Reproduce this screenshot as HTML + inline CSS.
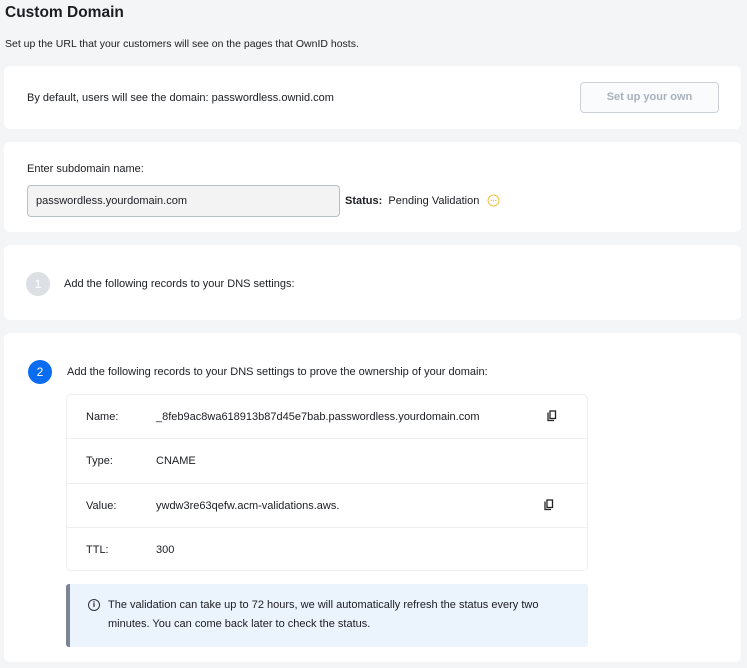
<!DOCTYPE html>
<html><head><style>
*{margin:0;padding:0;box-sizing:border-box}
body{width:747px;height:668px;background:#f4f5f7;font-family:"Liberation Sans",sans-serif;color:#1b1d21;font-size:11px;position:relative;overflow:hidden}
.a{position:absolute;white-space:nowrap}
.card{position:absolute;left:4px;width:737px;background:#fff;border-radius:6px}
.row{position:absolute;left:0;width:100%;height:44px;border-top:1px solid #eceef1}
.row span{position:absolute;top:16px}
.row svg{position:absolute;top:15px}
</style></head><body>
<div class="a" style="left:5px;top:4px;font-size:15.5px;font-weight:bold">Custom Domain</div>
<div class="a" style="left:5px;top:38px;font-size:10.5px">Set up the URL that your customers will see on the pages that OwnID hosts.</div>

<div class="card" style="top:66px;height:63px">
<div class="a" style="left:23px;top:26px">By default, users will see the domain: passwordless.ownid.com</div>
<div class="a" style="left:576px;top:16px;width:139px;height:31px;border:1px solid #ccd1d8;border-radius:4px;background:#fafbfc;color:#a9b1bd;text-align:center;line-height:29px;font-weight:bold">Set up your own</div>
</div>

<div class="card" style="top:142px;height:90px">
<div class="a" style="left:23px;top:21px">Enter subdomain name:</div>
<div class="a" style="left:23px;top:43px;width:313px;height:32px;border:1px solid #b8bec7;border-radius:4px;background:#f3f3f3;line-height:30px;padding-left:8px">passwordless.yourdomain.com</div>
<div class="a" style="left:341px;top:53px"><b>Status:</b>&nbsp; Pending Validation</div>
<svg class="a" style="left:483px;top:52px" width="13" height="13" viewBox="0 0 13 13"><circle cx="6.5" cy="6.5" r="5.5" fill="none" stroke="#f0c040" stroke-width="1"/><circle cx="4.2" cy="6.5" r=".7" fill="#f0c040"/><circle cx="6.5" cy="6.5" r=".7" fill="#f0c040"/><circle cx="8.8" cy="6.5" r=".7" fill="#f0c040"/></svg>
</div>

<div class="card" style="top:245px;height:75px">
<div class="a" style="left:22px;top:27px;width:24px;height:24px;border-radius:50%;background:#dcdfe3;color:#fff;text-align:center;line-height:24px;font-size:12px">1</div>
<div class="a" style="left:60px;top:33px">Add the following records to your DNS settings:</div>
</div>

<div class="card" style="top:333px;height:329px">
<div class="a" style="left:24px;top:27px;width:24px;height:24px;border-radius:50%;background:#0a6cf0;color:#fff;text-align:center;line-height:24px;font-size:12px">2</div>
<div class="a" style="left:63px;top:33px">Add the following records to your DNS settings to prove the ownership of your domain:</div>
<div class="a" style="left:62px;top:61px;width:522px;height:177px;border:1px solid #eceef1;border-radius:5px;overflow:hidden">
 <div class="row" style="top:-1px"><span style="left:19px">Name:</span><span style="left:89px">_8feb9ac8wa618913b87d45e7bab.passwordless.yourdomain.com</span><svg style="left:480px" width="10" height="12" viewBox="0 0 10 12"><path d="M1 2.5V10.5H7" fill="none" stroke="#222" stroke-width="1.3"/><rect x="3" y="1" width="5.5" height="7.5" fill="none" stroke="#222" stroke-width="1.3"/></svg></div>
 <div class="row" style="top:43px"><span style="left:19px">Type:</span><span style="left:89px">CNAME</span></div>
 <div class="row" style="top:88px"><span style="left:19px">Value:</span><span style="left:89px">ywdw3re63qefw.acm-validations.aws.</span><svg style="left:477px" width="10" height="12" viewBox="0 0 10 12"><path d="M1 2.5V10.5H7" fill="none" stroke="#222" stroke-width="1.3"/><rect x="3" y="1" width="5.5" height="7.5" fill="none" stroke="#222" stroke-width="1.3"/></svg></div>
 <div class="row" style="top:132px"><span style="left:19px">TTL:</span><span style="left:89px">300</span></div>
</div>
<div class="a" style="left:62px;top:251px;width:522px;height:63px;background:#ebf3fd;border-left:4px solid #7a8494;border-radius:3px">
 <div class="a" style="left:18px;top:15px;width:12px;height:12px;border:1.2px solid #333;border-radius:50%;font-size:8px;text-align:center;line-height:10px;font-weight:bold">i</div>
 <div class="a" style="left:38px;top:12px;line-height:19px;white-space:normal;width:470px">The validation can take up to 72 hours, we will automatically refresh the status every two minutes. You can come back later to check the status.</div>
</div>
</div>
</body></html>
